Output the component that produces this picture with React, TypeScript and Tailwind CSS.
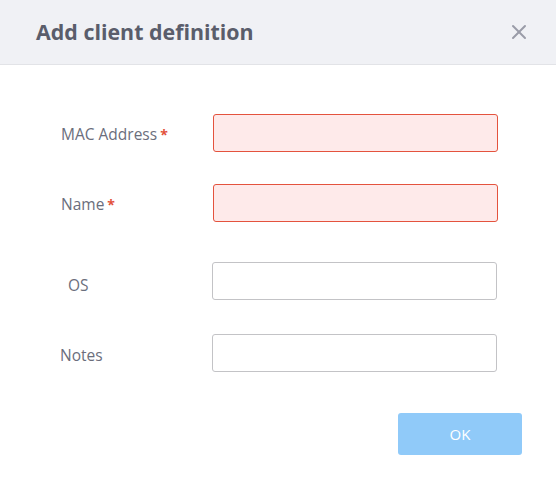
import { X } from "lucide-react";

type Field = {
  label: string;
  required?: boolean;
  labelPos: string;
  inputPad: string;
  gap: string;
};

const fields: Field[] = [
  { label: "MAC Address", required: true, labelPos: "pl-[61px] top-[9px]", inputPad: "pl-[213px]", gap: "mt-[49px]" },
  { label: "Name", required: true, labelPos: "pl-[61px] top-[9px]", inputPad: "pl-[213px]", gap: "mt-[32px]" },
  { label: "OS", labelPos: "pl-[68px] top-[12px]", inputPad: "pl-[212px]", gap: "mt-[40px]" },
  { label: "Notes", labelPos: "pl-[60px] top-[10px]", inputPad: "pl-[212px]", gap: "mt-[34px]" },
];

function FormRow({ field }: { field: Field }) {
  return (
    <div className={`relative flex h-[38px] items-center ${field.gap}`}>
      <label className={`absolute left-0 ${field.labelPos} text-[15.5px] leading-[22px] text-[#6b6e7c]`}>
        {field.label}
        {field.required && <span className="ml-[3px] text-[14px] font-bold text-[#e2513c]">*</span>}
      </label>
      <div className={`${field.inputPad} w-full`}>
        <input
          className={`h-[38px] w-[285px] rounded-[3px] border px-2 text-[14px] outline-none ${
            field.required
              ? "border-[#e4533e] bg-[#feeaea]"
              : "border-[#c3c3c6] bg-white"
          }`}
        />
      </div>
    </div>
  );
}

export default function App() {
  return (
    <div className="h-[478px] w-[556px] bg-white font-['Open_Sans','Noto_Sans',sans-serif]">
      <div className="flex h-[65px] items-center justify-between border-b border-[#e2e3e7] bg-[#f0f1f5] pl-[36px] pr-[25px]">
        <h2 className="text-[21.4px] font-bold text-[#5a5d6b]">Add client definition</h2>
        <X className="h-[24px] w-[24px] text-[#9a9ca8]" strokeWidth={2} />
      </div>
      {fields.map((f) => (
        <FormRow key={f.label} field={f} />
      ))}
      <div className="mt-[41px] flex justify-end pr-[34px]">
        <button className="h-[42px] w-[124px] rounded-[3px] bg-[#90caf9] text-[15px] text-white">
          OK
        </button>
      </div>
    </div>
  );
}
